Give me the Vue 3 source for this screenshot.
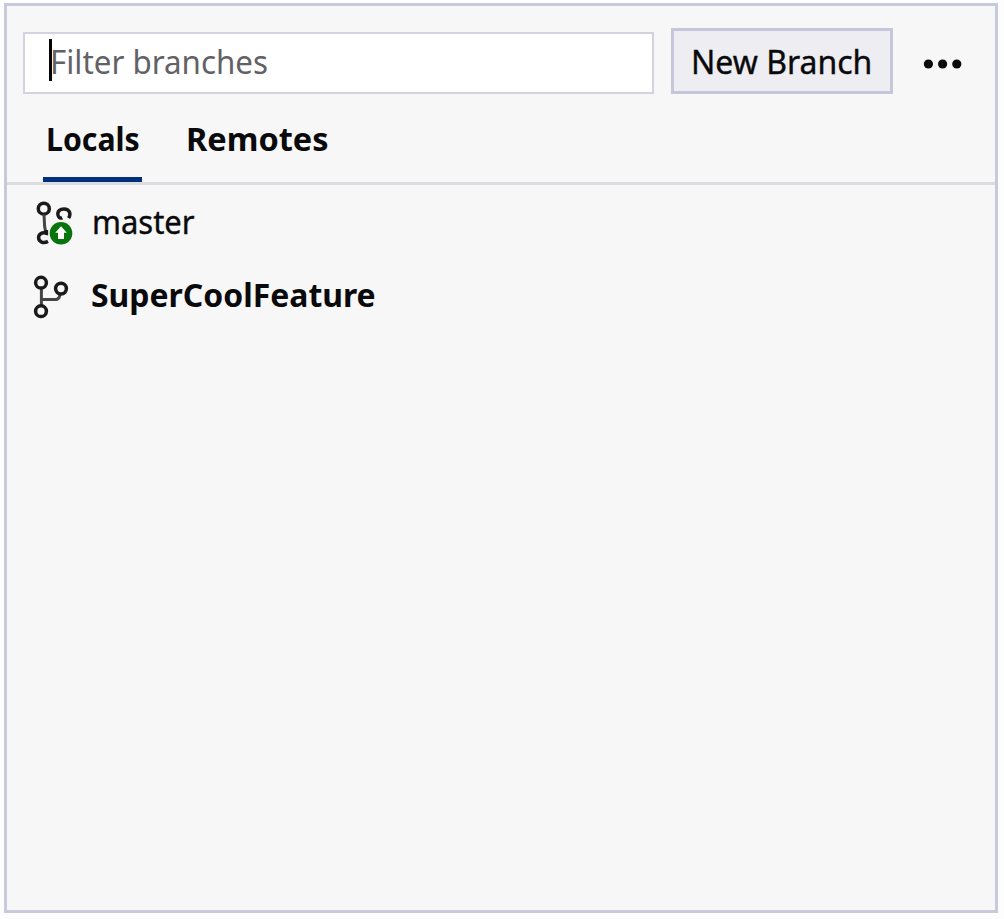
<script setup>
import { ref } from 'vue'

const filter = ref('Filter branches')
const tabs = ['Locals', 'Remotes']
const active = ref('Locals')
</script>

<template>
  <main class="stage">
    <section class="panel">
      <header class="toolbar">
        <div class="search">
          <span class="caret"></span>
          <span class="label placeholder">{{ filter }}</span>
        </div>
        <button class="new-branch" type="button"><span class="label">New Branch</span></button>
        <svg class="more" width="40" height="12" viewBox="0 0 40 12">
          <circle cx="5.4" cy="6" r="4.6" />
          <circle cx="19.6" cy="6" r="4.6" />
          <circle cx="33.8" cy="6" r="4.6" />
        </svg>
      </header>

      <nav class="tabs">
        <div v-for="tab in tabs" :key="tab" class="tab" :class="[tab.toLowerCase(), { active: tab === active }]">
          <span class="label">{{ tab }}</span>
        </div>
      </nav>

      <ul class="branches">
        <li class="branch">
          <svg class="icon" width="42" height="48" viewBox="32 198 42 48">
            <g class="line">
              <circle cx="43.8" cy="208.7" r="5.5" />
              <path class="thin" d="M44 214.5L44.6 226L45.6 232" />
              <path d="M46.4 230V233.2C41.6 232 38.6 234.3 38.6 237.6C38.6 242 43.4 243.8 48 241.4" />
              <path d="M62.3 217.8C60.5 218.6 58.6 217.6 58 215.2C57.2 211.3 60 208.9 64 208.9C69.4 208.9 71.4 213.6 68.6 218.2" />
            </g>
            <circle class="badge" cx="61" cy="233.2" r="11.3" />
            <path class="arrow" d="M61 226.3L66.8 232.8H64V239H58V232.8H55.2Z" />
          </svg>
          <span class="label master">master</span>
        </li>
        <li class="branch current">
          <svg class="icon" width="42" height="48" viewBox="32 272 42 48">
            <g class="line">
              <path class="thin" d="M41.4 288.5V305.5M42 299.6H55.5C58 299.6 59.5 297.5 60 294.5" />
              <circle cx="41" cy="282.7" r="5.4" />
              <circle cx="41" cy="311.2" r="5.4" />
              <circle cx="61" cy="288.6" r="5.4" />
            </g>
          </svg>
          <span class="label feature">SuperCoolFeature</span>
        </li>
      </ul>
    </section>
  </main>
</template>

<style>
body {
  background: #fff;
}
</style>

<style scoped>
* {
  box-sizing: border-box;
}
.stage {
  height: 919px;
  padding: 3px 6px 6px 4px;
  background: #fdfdfe;
  font-family: "Noto Sans", "Open Sans", sans-serif;
  font-size: 33px;
  color: #0a0a0c;
}
.panel {
  height: 910px;
  border: 3px solid #c9c9dc;
  background: #f7f7f7;
}
.toolbar {
  display: flex;
  height: 87px;
  padding: 22px 0 0 16px;
}
.search {
  display: flex;
  align-items: center;
  width: 631px;
  height: 62px;
  margin-top: 4px;
  padding: 0 0 2px 24px;
  border: 2px solid #d2d2e1;
  background: #fff;
}
.caret {
  width: 3px;
  height: 42px;
  margin: -4px -2px 0 0;
  background: #050505;
}
.label {
  display: block;
  line-height: 40px;
  white-space: nowrap;
  transform-origin: left center;
}
.placeholder {
  color: #626266;
  transform: scaleX(0.949);
}
.new-branch {
  width: 222px;
  height: 66px;
  margin-left: 17px;
  padding: 2px 0 0 17px;
  border: 3px solid #c6c6da;
  background: #eeeef2;
  font: inherit;
  color: inherit;
  text-align: left;
}
.new-branch .label {
  transform: scaleX(0.969);
  -webkit-text-stroke: 0.4px currentColor;
}
.more {
  margin: 30px 0 0 30px;
  fill: #0a0a0a;
}
.tabs {
  display: flex;
  height: 92px;
  padding-left: 36px;
  border-bottom: 3px solid #dcdce0;
  font-weight: 700;
}
.tab {
  height: 89px;
  padding: 26px 0 0 3px;
}
.locals {
  width: 99px;
}
.locals .label {
  transform: scaleX(0.917);
}
.remotes {
  margin-left: 41px;
}
.remotes .label {
  transform: scaleX(0.985);
}
.active {
  border-bottom: 5px solid #002f7d;
}
.branches {
  margin: 0;
  padding: 0 0 0 25px;
  list-style: none;
}
.branch {
  display: flex;
  align-items: center;
  height: 74px;
}
.icon {
  flex: none;
  margin-right: 18px;
}
.master {
  transform: scaleX(0.938);
  -webkit-text-stroke: 0.4px currentColor;
}
.feature {
  margin: -2px 0 0 -1px;
  transform: scaleX(0.967);
}
.current {
  font-weight: 700;
}
.line {
  fill: none;
  stroke: #1a1a1a;
  stroke-width: 3.5;
}
.thin {
  stroke-width: 3;
  stroke: #444;
}
.badge {
  fill: #08740c;
}
.arrow {
  fill: #fff;
}
</style>
